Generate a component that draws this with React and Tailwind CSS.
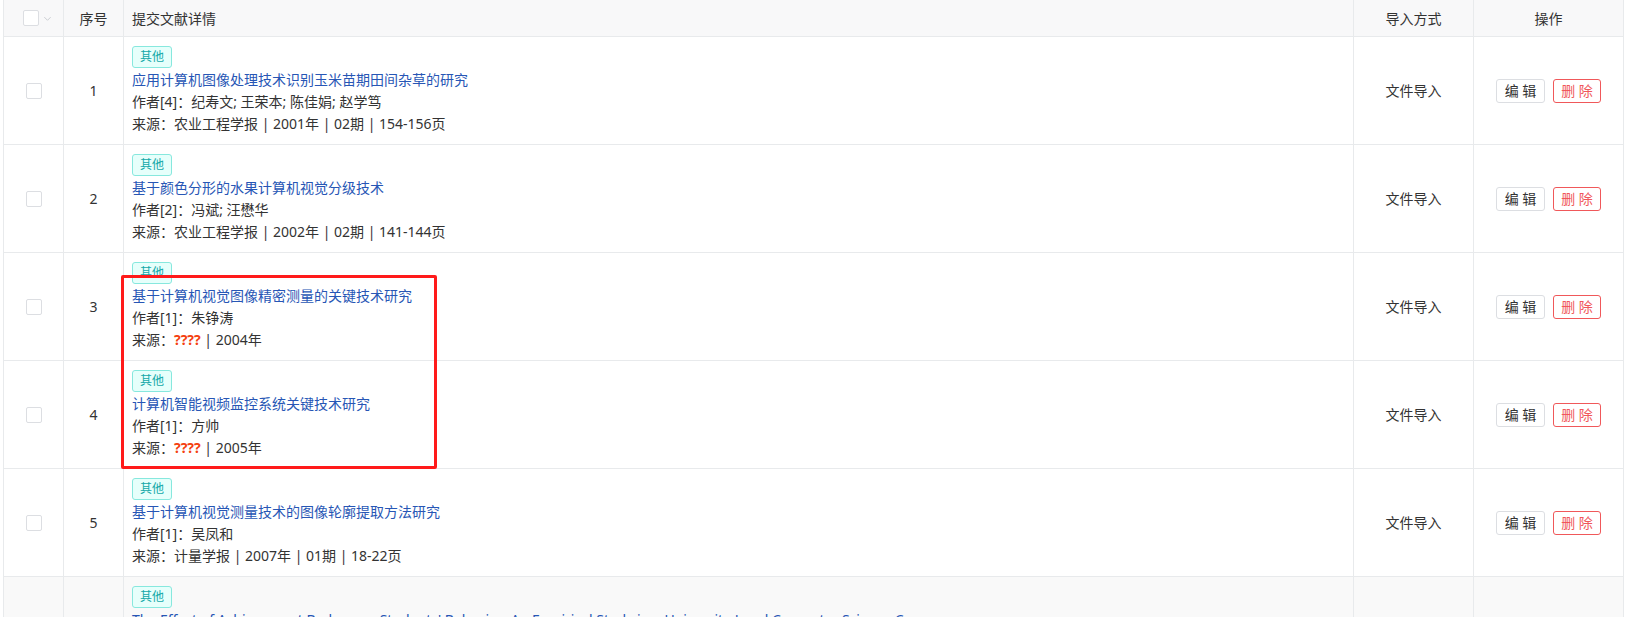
import React from "react";

const rows = [
  {
    n: 1,
    title: "应用计算机图像处理技术识别玉米苗期田间杂草的研究",
    author: "作者[4]：纪寿文; 王荣本; 陈佳娟; 赵学笃",
    src: ["农业工程学报", "2001年", "02期", "154-156页"],
  },
  {
    n: 2,
    title: "基于颜色分形的水果计算机视觉分级技术",
    author: "作者[2]：冯斌; 汪懋华",
    src: ["农业工程学报", "2002年", "02期", "141-144页"],
  },
  {
    n: 3,
    title: "基于计算机视觉图像精密测量的关键技术研究",
    author: "作者[1]：朱铮涛",
    src: null,
    year: "2004年",
  },
  {
    n: 4,
    title: "计算机智能视频监控系统关键技术研究",
    author: "作者[1]：方帅",
    src: null,
    year: "2005年",
  },
  {
    n: 5,
    title: "基于计算机视觉测量技术的图像轮廓提取方法研究",
    author: "作者[1]：吴凤和",
    src: ["计量学报", "2007年", "01期", "18-22页"],
  },
  {
    n: 6,
    title:
      "The Effect of Achievement Badges on Students' Behavior: An Empirical Study in a University-Level Computer Science Course",
    author: "作者[2]：Lauri Hakulinen; Tapio Auvinen",
    src: ["International Journal of Emerging Technologies in Learning", "2015年"],
    striped: true,
  },
];

function Checkbox() {
  return (
    <span className="inline-block w-4 h-4 border border-[#dcdee2] rounded-[2px] bg-white" />
  );
}

function Tag() {
  return (
    <span className="inline-flex items-center justify-center h-[22px] w-[40px] border border-[#87e8de] bg-[#e6fffb] text-[#13a8a8] text-[12px] rounded-[3px] leading-none">
      其他
    </span>
  );
}

function Source({ r }) {
  if (!r.src) {
    return (
      <div className="leading-[22px]">
        来源：<span className="text-[#f4400f] font-bold">????</span> | {r.year}
      </div>
    );
  }
  return <div className="leading-[22px]">来源：{r.src.join(" | ")}</div>;
}

export default function App() {
  const cell = "border-r border-[#e8eaec]";
  return (
    <div
      className="relative w-[1640px] h-[617px] overflow-hidden bg-white text-[14px] text-[#333]"
      style={{ fontFamily: '"Noto Sans", "Noto Sans CJK SC", sans-serif' }}
    >
      <div className="ml-[3px] w-[1621px] border-l border-[#e8eaec]">
        {/* header */}
        <div className="grid grid-cols-[60px_60px_1230px_120px_150px] h-[37px] bg-[#f8f8f9] border-b border-[#e8eaec]">
          <div className={`${cell} flex items-center pl-[19px] gap-[4px]`}>
            <Checkbox />
            <svg width="9" height="9" viewBox="0 0 10 10" className="text-[#c5c8ce]">
              <path d="M1.5 3.5 L5 7 L8.5 3.5" fill="none" stroke="currentColor" strokeWidth="1" />
            </svg>
          </div>
          <div className={`${cell} flex items-center justify-center`}>序号</div>
          <div className={`${cell} flex items-center pl-[8px]`}>提交文献详情</div>
          <div className={`${cell} flex items-center justify-center`}>导入方式</div>
          <div className={`${cell} flex items-center justify-center`}>操作</div>
        </div>
        {/* rows */}
        {rows.map((r) => (
          <div
            key={r.n}
            className={`grid grid-cols-[60px_60px_1230px_120px_150px] h-[108px] border-b border-[#e8eaec] ${
              r.striped ? "bg-[#f9f9f9]" : "bg-white"
            }`}
          >
            <div className={`${cell} flex items-center justify-center pl-[1px]`}>
              {!r.striped && <Checkbox />}
            </div>
            <div className={`${cell} flex items-center justify-center`}>{!r.striped && r.n}</div>
            <div className={`${cell} pl-[8px] pt-[9px]`}>
              <div className="h-[22px] mb-[1px] flex">
                <Tag />
              </div>
              <div className="leading-[22px] text-[#2756b5]">{r.title}</div>
              <div className="leading-[22px]">{r.author}</div>
              <Source r={r} />
            </div>
            <div className={`${cell} flex items-center justify-center`}>{!r.striped && "文件导入"}</div>
            <div className={`${cell} flex items-center justify-center gap-[8px]`}>
              {!r.striped && (
                <>
                  <button className="h-[24px] w-[49px] border border-[#dcdee2] rounded-[3px] bg-white text-[14px] text-[#333] leading-none">
                    编 辑
                  </button>
                  <button className="h-[24px] w-[48px] border border-[#f0585a] rounded-[3px] bg-white text-[14px] text-[#f0585a] leading-none">
                    删 除
                  </button>
                </>
              )}
            </div>
          </div>
        ))}
      </div>
      {/* annotation box */}
      <div className="absolute left-[121px] top-[275px] w-[316px] h-[194px] border-[3px] border-[#ff1a1a] rounded-[2px] pointer-events-none" />
    </div>
  );
}
